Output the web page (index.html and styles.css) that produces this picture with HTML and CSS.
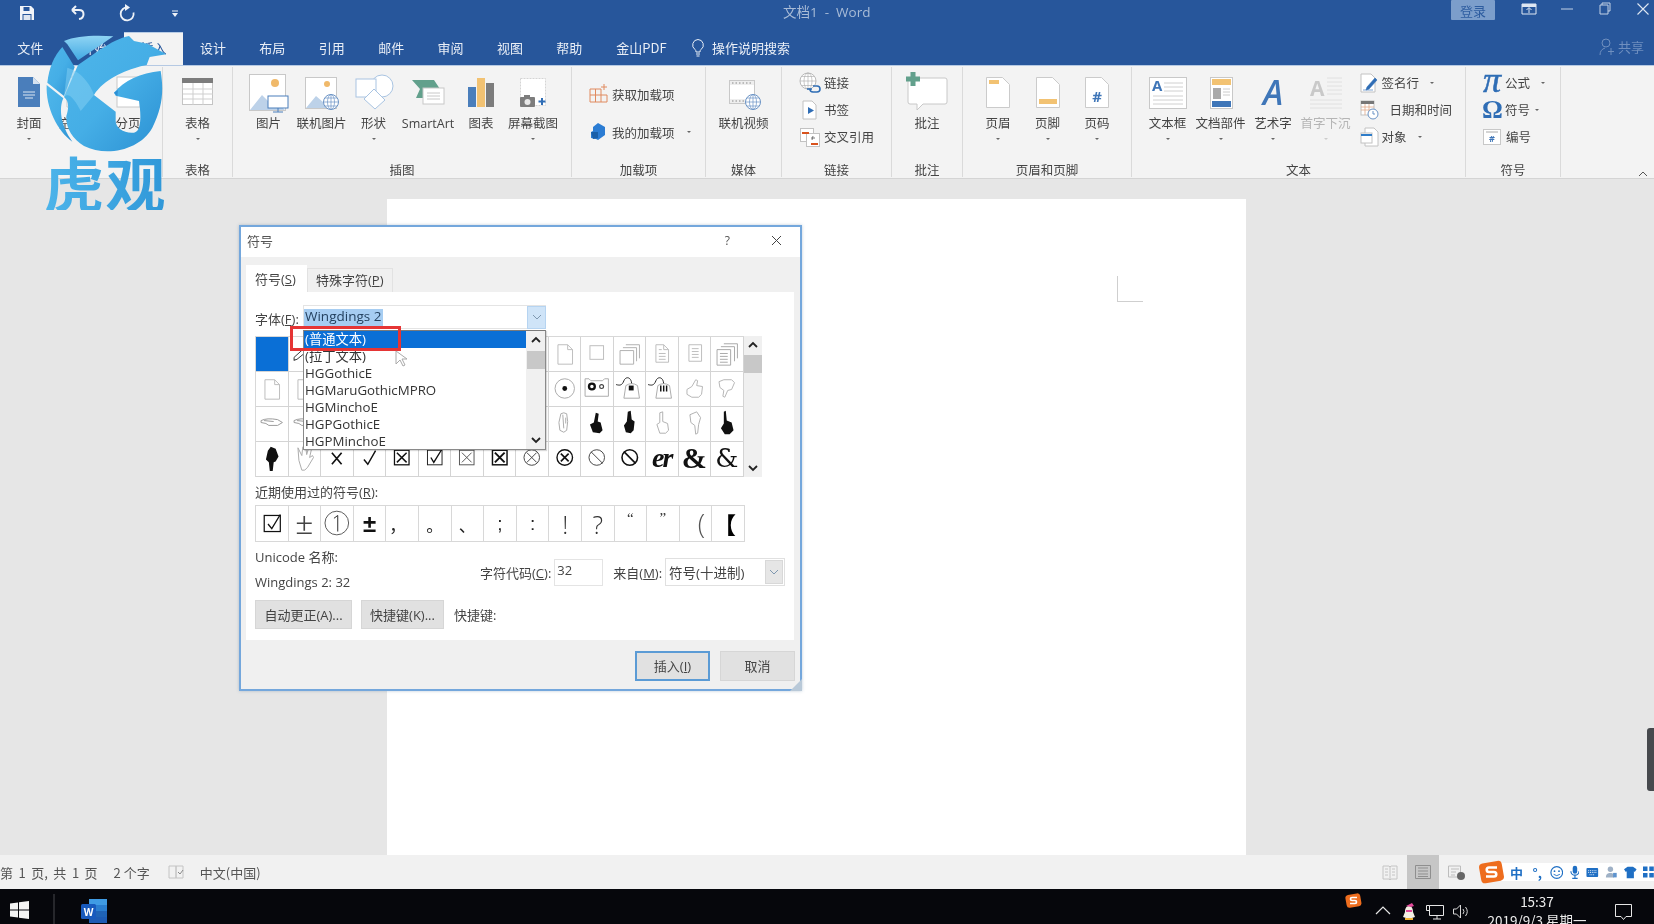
FILE: index.html
```html
<!DOCTYPE html>
<html lang="zh-CN">
<head>
<meta charset="utf-8">
<title>文档1 - Word</title>
<link rel="stylesheet" href="styles.css">
</head>
<body>
<svg class="defs" width="0" height="0">
  <defs>
    <symbol id="page" viewBox="0 0 32 35"><path d="M9 9h10l5 5v15H9z M19 9v5h5" fill="#fff" stroke="#bdbdbd"/></symbol>
    <symbol id="square" viewBox="0 0 32 35"><rect x="9" y="10" width="14" height="14" fill="#fff" stroke="#bdbdbd"/></symbol>
    <symbol id="stack" viewBox="0 0 32 35"><path d="M12 9h14v14M9 12h14v14M6 15h14v14H6z" fill="none" stroke="#b0b0b0"/></symbol>
    <symbol id="doc" viewBox="0 0 32 35"><path d="M10 9h8l5 5v13H10z M18 9v5h5 M13 14h3M13 18h7M13 21h7M13 24h7" fill="none" stroke="#bdbdbd"/></symbol>
    <symbol id="lines" viewBox="0 0 32 35"><path d="M10 9h13v17H10z M13 13h7M13 16h7M13 19h7M13 22h7" fill="none" stroke="#bdbdbd"/></symbol>
    <symbol id="docs" viewBox="0 0 32 35"><path d="M13 8h14v15M10 11h14v15M6 14h14v16H6z M9 18h8M9 21h8M9 24h8M9 27h8" fill="#fff" stroke="#a8a8a8"/></symbol>
    <symbol id="target" viewBox="0 0 32 35"><circle cx="16" cy="18" r="10" fill="#fff" stroke="#aaa"/><circle cx="16" cy="18" r="2.500" fill="#111"/></symbol>
    <symbol id="cassette" viewBox="0 0 32 35"><path d="M4 8h4l2 2h12l2-2h4v18H4z" fill="#fff" stroke="#aaa"/><circle cx="11" cy="16" r="3" fill="none" stroke="#111" stroke-width="2.400"/><circle cx="21" cy="16" r="2" fill="none" stroke="#444" stroke-width="1.200"/></symbol>
    <symbol id="mouse1" viewBox="0 0 32 35"><path d="M2 14c4 1 6 1 8-4 2-5 8-4 8 4" fill="none" stroke="#222"/><path d="M12 15q6-4 12 0l2 13H10z" fill="#fff" stroke="#aaa"/><rect x="15" y="15" width="5" height="5" fill="#111"/></symbol>
    <symbol id="mouse2" viewBox="0 0 32 35"><path d="M2 14c4 1 6 1 8-4 2-5 8-4 8 4" fill="none" stroke="#222"/><path d="M12 15q6-4 12 0l2 13H10z" fill="#fff" stroke="#aaa"/><path d="M15 15v6M18 15v6M21 15v6" stroke="#111" stroke-width="1.500"/></symbol>
    <symbol id="thumbup" viewBox="0 0 32 35"><path d="M8 19l5-3 4-7 2 1-1 5 6 1-1 8-3 3h-7l-5-3z" fill="#fff" stroke="#b5b5b5"/></symbol>
    <symbol id="thumbdown" viewBox="0 0 32 35"><path d="M8 11l5-2h8l3 3-3 7-4 1-3 7-2-1 1-6-4-3z" fill="#fff" stroke="#b5b5b5"/></symbol>
    <symbol id="hand1" viewBox="0 0 32 35"><path d="M11 25l-1-8 2-9 3-1 3 1 1 8-1 9-3 2zM14 9l1 14M17 12v6" fill="#fff" stroke="#aaa"/></symbol>
    <symbol id="hand2" viewBox="0 0 32 35"><path d="M12 27l-3-8 4-2 2-10 3 1-1 8 3 1 2 8-3 3z" fill="#111"/></symbol>
    <symbol id="hand3" viewBox="0 0 32 35"><path d="M12 27l-2-7 3-4 1-10 3-1 1 9 3 2-1 9-3 3z" fill="#111"/></symbol>
    <symbol id="hand4" viewBox="0 0 32 35"><path d="M11 19l3-2V7l3-1v10l5 2 1 7-3 3h-6z" fill="#fff" stroke="#b0b0b0"/></symbol>
    <symbol id="hand5" viewBox="0 0 32 35"><path d="M11 9l7-3 4 6-2 7-1 9-2 1-1-9-4-3z" fill="#fff" stroke="#b0b0b0"/></symbol>
    <symbol id="hand6" viewBox="0 0 32 35"><path d="M13 6l2-1 1 10 5 2 2 8-4 4h-5l-4-6 3-5z" fill="#111"/></symbol>
    <symbol id="handl" viewBox="0 0 32 35"><path d="M5 15q6-3 17-1l5 3-5 3h-9l-3-2-5-1z M8 15l10 1" fill="#fff" stroke="#999"/></symbol>
    <symbol id="blackhand" viewBox="0 0 32 35"><path d="M15 6l5 2 3 8-3 5-2 1-1 9h-3l-1-9-3-3 2-9z" fill="#111"/></symbol>
    <symbol id="whitehand" viewBox="0 0 32 35"><path d="M9 7l4 8 1-9 3 0 1 8 2-7 3 1-2 9 3-2 1 2-6 10-3 3h-3l-3-10z" fill="#fff" stroke="#aaa"/></symbol>
    <symbol id="pen" viewBox="0 0 32 35"><path d="M5 22l10-9 3 3-10 8-3 1zM5 25l1-1" fill="#fff" stroke="#333"/></symbol>
    <symbol id="crossbig" viewBox="0 0 32 35"><path d="M11 12l10 12M21 12l-10 12" fill="none" stroke="#111" stroke-width="1.700"/></symbol>
    <symbol id="checkbig" viewBox="0 0 32 35"><path d="M10 19l4 5 8-14" fill="none" stroke="#111" stroke-width="1.500"/></symbol>
    <symbol id="boxx" viewBox="0 0 32 35"><rect x="8.500" y="9.500" width="15" height="15" fill="none" stroke="#111" stroke-width="1.300"/><path d="M11 12l10 10M21 12l-10 10" stroke="#111" stroke-width="1.500"/></symbol>
    <symbol id="boxc" viewBox="0 0 32 35"><rect x="8.500" y="9.500" width="15" height="15" fill="none" stroke="#222"/><path d="M12 17l3 5 8-13" fill="none" stroke="#111" stroke-width="1.400"/></symbol>
    <symbol id="boxthin" viewBox="0 0 32 35"><rect x="8.500" y="9.500" width="15" height="15" fill="none" stroke="#555"/><path d="M11 12l10 10M21 12l-10 10" stroke="#555"/></symbol>
    <symbol id="boxbold" viewBox="0 0 32 35"><rect x="8.500" y="9.500" width="15" height="15" fill="none" stroke="#111" stroke-width="1.500"/><path d="M11 12l10 10M21 12l-10 10" stroke="#111" stroke-width="2"/></symbol>
    <symbol id="cxthin" viewBox="0 0 32 35"><circle cx="16" cy="17" r="8" fill="none" stroke="#444"/><path d="M11 12l10 10M21 12l-10 10" stroke="#444"/></symbol>
    <symbol id="cxbold" viewBox="0 0 32 35"><circle cx="16" cy="17" r="8" fill="none" stroke="#111" stroke-width="1.400"/><path d="M12 13l8 8M20 13l-8 8" stroke="#111" stroke-width="1.700"/></symbol>
    <symbol id="nothin" viewBox="0 0 32 35"><circle cx="16" cy="17" r="8" fill="none" stroke="#444"/><path d="M10 11l12 12" stroke="#444"/></symbol>
    <symbol id="nobold" viewBox="0 0 32 35"><circle cx="16" cy="17" r="8" fill="none" stroke="#111" stroke-width="1.600"/><path d="M10 11l12 12" stroke="#111" stroke-width="1.700"/></symbol>
    <symbol id="rcheck" viewBox="0 0 32 37"><rect x="8" y="10" width="17" height="17" fill="none" stroke="#111" stroke-width="1.300"/><path d="M12 19l4 5 9-15" fill="none" stroke="#111" stroke-width="1.400"/></symbol>
    <symbol id="rone" viewBox="0 0 32 37"><circle cx="16" cy="18" r="12.500" fill="none" stroke="#555"/><path d="M13 13l4-3v17" fill="none" stroke="#222"/></symbol>
    <symbol id="chev-up" viewBox="0 0 10 8"><path d="M1 6l4-4 4 4" fill="none" stroke="#222" stroke-width="1.800"/></symbol>
    <symbol id="chev-dn" viewBox="0 0 10 8"><path d="M1 2l4 4 4-4" fill="none" stroke="#222" stroke-width="1.800"/></symbol>
    <symbol id="chev-thin" viewBox="0 0 10 8"><path d="M1 2l4 4 4-4" fill="none" stroke="#7f98b0"/></symbol>
    <linearGradient id="logoG" x1="0" y1="0" x2="1" y2="1"><stop offset="0" stop-color="#4fb6ea"/><stop offset=".5" stop-color="#45aee6"/><stop offset="1" stop-color="#2a8fd2"/></linearGradient>
    <linearGradient id="logoH" x1="0" y1="0" x2="0" y2="1"><stop offset="0" stop-color="#8fd4f4"/><stop offset="1" stop-color="#41a9e3"/></linearGradient>
  </defs>
</svg>

<div class="app">
  <header class="chrome">
    <div class="titlebar">
      <div class="qat">
        <svg class="qi" width="18" height="18" viewBox="0 0 18 18"><path d="M2 2h11l3 3v11H2z" fill="#f1f4f9"/><rect x="5.500" y="3" width="6" height="4" fill="#27569b"/><rect x="4.500" y="10" width="9" height="6" fill="#27569b"/><rect x="5.500" y="11" width="7" height="5" fill="#dfe6f0"/></svg>
        <svg class="qi" width="18" height="18" viewBox="0 0 18 18"><path d="M4 6h7c6 0 6 8 0 9M4 6l4-4M4 6l4 4" fill="none" stroke="#eef2f8" stroke-width="2"/></svg>
        <svg class="qi" width="18" height="18" viewBox="0 0 18 18"><path d="M10 3.500a6.500 6.500 0 1 0 5.500 5" fill="none" stroke="#eef2f8" stroke-width="1.800"/><path d="M7 0l5 3.500-5 3.500z" fill="#eef2f8"/></svg>
        <svg class="qcaret" width="8" height="8" viewBox="0 0 8 8"><path d="M1 3h6L4 7z" fill="#eef2f8"/><path d="M1 1h6" stroke="#eef2f8"/></svg>
      </div>
      <div class="doctitle">文档1&nbsp; -&nbsp; Word</div>
      <div class="winbtns">
        <button class="login">登录</button>
        <svg width="16" height="14" viewBox="0 0 16 14"><path d="M1 2h14v10H1z" fill="none" stroke="#dfe7f2"/><path d="M1 2h14v3H1z" fill="#dfe7f2"/><path d="M8 11V6M5.500 8L8 5.500 10.500 8" fill="none" stroke="#dfe7f2"/></svg>
        <svg class="wb-min" width="12" height="14" viewBox="0 0 12 14"><path d="M0 7h12" stroke="#c3d1e5"/></svg>
        <svg class="wb-max" width="12" height="14" viewBox="0 0 12 14"><path d="M3 3V1h8v8H9M1 3h8v9H1z" fill="none" stroke="#c3d1e5"/></svg>
        <svg class="wb-close" width="12" height="14" viewBox="0 0 12 14"><path d="M.5 1.500l11 11M11.500 1.500l-11 11" stroke="#dfe7f2" stroke-width="1.100"/></svg>
      </div>
    </div>
    <nav class="tabs">
      <div class="tab tab-file">文件</div>
      <div class="tab">开始</div>
      <div class="tab tab-active">插入</div>
      <div class="tab">设计</div>
      <div class="tab">布局</div>
      <div class="tab">引用</div>
      <div class="tab">邮件</div>
      <div class="tab">审阅</div>
      <div class="tab">视图</div>
      <div class="tab">帮助</div>
      <div class="tab tab-pdf">金山PDF</div>
      <div class="search">
        <svg width="14" height="20" viewBox="0 0 14 20"><path d="M7 1.500a5.500 5.500 0 0 0-3 10c.8.600 1 1.500 1 2.500h4c0-1 .2-1.900 1-2.500a5.500 5.500 0 0 0-3-10zM5 16h4M5.500 18h3" fill="none" stroke="#eaf0f8"/></svg>
        <span>操作说明搜索</span>
      </div>
      <div class="share">
        <svg width="16" height="18" viewBox="0 0 16 18"><circle cx="7" cy="5" r="4" fill="none" stroke="#6f8fbf"/><path d="M1 17c0-4 2-6 5-7M12 10v7M9 13.500h6" fill="none" stroke="#6f8fbf"/></svg>
        <span>共享</span>
      </div>
    </nav>
  </header>

  <section class="ribbon">
    <div class="group g-pages">
      <div class="items gap-pages">
        <div class="item w40">
          <div class="ico"><svg width="44" height="42" viewBox="0 0 44 42"><path d="M11 5h15l7 7v23H11z" fill="#4a7ebb"/><path d="M26 5l7 7h-7z" fill="#d5e2f0"/><path d="M16 20h12M16 23h12M18 26h8" stroke="#dbe6f2"/></svg></div>
          <span class="lab">封面</span><i class="caret"></i>
        </div>
        <div class="item w42">
          <div class="ico"><svg width="44" height="42" viewBox="0 0 44 42"><path d="M11 5h16l6 6v24H11z" fill="#fff" stroke="#c8c8c8"/></svg></div>
          <span class="lab">空白页</span>
        </div>
        <div class="item w44">
          <div class="ico"><svg width="44" height="42" viewBox="0 0 44 42"><rect x="11" y="5" width="23" height="12" fill="#fff" stroke="#c8c8c8"/><rect x="11" y="21" width="23" height="14" fill="#fff" stroke="#c8c8c8"/></svg></div>
          <span class="lab">分页</span>
        </div>
      </div>
      <div class="glabel"></div>
    </div>

    <div class="group g-table">
      <div class="items center">
        <div class="item w40">
          <div class="ico"><svg width="44" height="42" viewBox="0 0 44 42"><rect x="6.500" y="6.500" width="30" height="26" fill="#fff" stroke="#c4c4c4"/><rect x="6" y="6" width="31" height="5" fill="#7c7c7c"/><path d="M7 17h30M7 22h30M7 27h30M17 11v22M27 11v22" stroke="#cfcfcf"/></svg></div>
          <span class="lab">表格</span><i class="caret"></i>
        </div>
      </div>
      <div class="glabel">表格</div>
    </div>

    <div class="group g-illus">
      <div class="items gap-illus">
        <div class="item w42">
          <div class="ico"><svg width="44" height="42" viewBox="0 0 44 42"><rect x="2.500" y="2.500" width="36" height="36" fill="#fff" stroke="#c8c8c8"/><circle cx="28" cy="11" r="4" fill="#f0b96a"/><path d="M3 38l12-15 8 8 5-3 10 10z" fill="#bdd2e9"/><rect x="21" y="24" width="20" height="12" fill="#fff" stroke="#4a7ebb"/><path d="M31 36v4M26 40h10" stroke="#4a7ebb"/></svg></div>
          <span class="lab">图片</span>
        </div>
        <div class="item w57">
          <div class="ico"><svg width="44" height="42" viewBox="0 0 44 42"><rect x="5.500" y="5.500" width="31" height="31" fill="#fff" stroke="#c8c8c8"/><circle cx="27" cy="12" r="3" fill="#f0b96a"/><path d="M6 36l10-12 7 6 13 6z" fill="#bdd2e9"/><circle cx="31" cy="30" r="7.500" fill="#fff" stroke="#6b93c5"/><path d="M23.500 30h15M31 22.500v15M25 26h12M25 34h12" stroke="#6b93c5" stroke-width=".7" fill="none"/><ellipse cx="31" cy="30" rx="3.500" ry="7.500" fill="none" stroke="#6b93c5" stroke-width=".7"/></svg></div>
          <span class="lab">联机图片</span>
        </div>
        <div class="item w40">
          <div class="ico"><svg width="44" height="42" viewBox="0 0 44 42"><circle cx="30" cy="14" r="11" fill="#fff" stroke="#a9c4e2"/><rect x="4" y="7" width="20" height="18" fill="#fff" stroke="#a9c4e2"/><path d="M12 27l10-10 11 11-10 9z" fill="#fff" stroke="#a9c4e2"/></svg></div>
          <span class="lab">形状</span><i class="caret"></i>
        </div>
        <div class="item w62">
          <div class="ico"><svg width="44" height="42" viewBox="0 0 44 42"><path d="M6 8h22l6 9-6 9H10l4-9z" fill="#62a08c"/><rect x="17" y="16" width="21" height="16" fill="#fff" stroke="#c8c8c8"/><path d="M21 21h13M21 24h13M21 27h13" stroke="#c8c8c8"/></svg></div>
          <span class="lab">SmartArt</span>
        </div>
        <div class="item w37">
          <div class="ico"><svg width="44" height="42" viewBox="0 0 44 42"><rect x="9" y="15" width="8" height="20" fill="#4a7ebb"/><rect x="18" y="6" width="8" height="29" fill="#f2c272"/><rect x="27" y="11" width="8" height="24" fill="#7c7c7c"/></svg></div>
          <span class="lab">图表</span>
        </div>
        <div class="item w60">
          <div class="ico"><svg width="44" height="42" viewBox="0 0 44 42"><rect x="9.500" y="6.500" width="25" height="27" fill="#fff" stroke="#d4d4d4" stroke-dasharray="2 1"/><rect x="9" y="25" width="15" height="10" rx="1" fill="#7d7d7d"/><rect x="13" y="23" width="6" height="3" fill="#7d7d7d"/><circle cx="16.500" cy="30" r="3" fill="#e8e8e8"/><path d="M31 26v7M27.500 29.500h7" stroke="#2f6db5" stroke-width="2"/></svg></div>
          <span class="lab">屏幕截图</span><i class="caret"></i>
        </div>
      </div>
      <div class="glabel">插图</div>
    </div>

    <div class="group g-addin">
      <div class="items stack stack-addin">
        <div class="row">
          <svg class="rowi" width="20" height="20" viewBox="0 0 20 20"><path d="M1 5h11v13H1zM1 11h11M6.500 5v13M12 11h6v7h-6" fill="none" stroke="#e08a5f"/><path d="M15 0v6M12 3h6" stroke="#e08a5f"/></svg>
          <span>获取加载项</span>
        </div>
        <div class="row">
          <svg class="rowi" width="20" height="18" viewBox="0 0 20 18"><path d="M9 0l7 4v8l-7 5-2-1-5-1V9l2-1V4z" fill="#2b7cd3"/><path d="M2 9h7v6l-5 1z" fill="#1a5fa8"/></svg>
          <span>我的加载项</span><i class="caret inline c-add"></i>
        </div>
      </div>
      <div class="glabel">加载项</div>
    </div>

    <div class="group g-media">
      <div class="items center">
        <div class="item w52">
          <div class="ico"><svg width="44" height="42" viewBox="0 0 44 42"><rect x="7.500" y="8.500" width="25" height="23" fill="#fff" stroke="#c8c8c8"/><path d="M8 9h24v4H8zM8 27h24v4H8z" fill="#eee"/><path d="M10 11h20M10 29h20" stroke="#888" stroke-dasharray="1.500 2"/><circle cx="31" cy="30" r="7.500" fill="#fff" stroke="#6b93c5"/><path d="M23.500 30h15M31 22.500v15M25 26h12M25 34h12" stroke="#6b93c5" stroke-width=".7"/><ellipse cx="31" cy="30" rx="3.500" ry="7.500" fill="none" stroke="#6b93c5" stroke-width=".7"/></svg></div>
          <span class="lab">联机视频</span>
        </div>
      </div>
      <div class="glabel">媒体</div>
    </div>

    <div class="group g-links">
      <div class="items stack stack-three">
        <div class="row">
          <svg class="rowi wide" width="22" height="22" viewBox="0 0 22 22"><circle cx="9" cy="9" r="8" fill="#fff" stroke="#a8a8a8" stroke-width=".8"/><path d="M1 9h16M9 1v16M3 4.500h12M3 13.500h12" stroke="#a8a8a8" stroke-width=".6"/><ellipse cx="9" cy="9" rx="4" ry="8" fill="none" stroke="#a8a8a8" stroke-width=".6"/><path d="M8 17h5M14 14h4a3 3 0 0 1 0 6h-4a3 3 0 0 1-3-3" fill="none" stroke="#2f6db5" stroke-width="1.600"/></svg>
          <span>链接</span>
        </div>
        <div class="row">
          <svg class="rowi wide" width="22" height="20" viewBox="0 0 22 20"><path d="M4 1h9l4 4v14H4z" fill="#fff" stroke="#c2c2c2"/><path d="M9 7l6 3.500L9 14z" fill="#2f6db5"/></svg>
          <span>书签</span>
        </div>
        <div class="row">
          <svg class="rowi wide" width="22" height="20" viewBox="0 0 22 20"><rect x="1.500" y="1.500" width="13" height="13" fill="#fff" stroke="#c2c2c2"/><rect x="7.500" y="6.500" width="13" height="13" fill="#fff" stroke="#c2c2c2"/><path d="M3 6h7" stroke="#d9531e" stroke-width="2"/><path d="M12 17h7" stroke="#d9531e" stroke-width="2"/><path d="M14 9l-1 4M12 11h4" stroke="#777"/></svg>
          <span>交叉引用</span>
        </div>
      </div>
      <div class="glabel">链接</div>
    </div>

    <div class="group g-comment">
      <div class="items center">
        <div class="item w40">
          <div class="ico"><svg width="44" height="42" viewBox="0 0 44 42"><path d="M5 6h35a2 2 0 0 1 2 2v22a2 2 0 0 1-2 2H18l-6 6v-6H5a2 2 0 0 1-2-2V8a2 2 0 0 1 2-2z" fill="#fff" stroke="#c8c8c8"/><path d="M8 0v14M1 7h14" stroke="#62a08c" stroke-width="5"/></svg></div>
          <span class="lab">批注</span>
        </div>
      </div>
      <div class="glabel">批注</div>
    </div>

    <div class="group g-hf">
      <div class="items gap-hf">
        <div class="item w40">
          <div class="ico"><svg width="44" height="42" viewBox="0 0 44 42"><path d="M10.500 5.500h16l7 7v23h-23z" fill="#fff" stroke="#cbcbcb"/><rect x="13" y="8" width="10" height="4" fill="#f2c272"/></svg></div>
          <span class="lab">页眉</span><i class="caret"></i>
        </div>
        <div class="item w40">
          <div class="ico"><svg width="44" height="42" viewBox="0 0 44 42"><path d="M10.500 5.500h16l7 7v23h-23z" fill="#fff" stroke="#cbcbcb"/><rect x="13" y="27" width="18" height="5" fill="#f2c272"/></svg></div>
          <span class="lab">页脚</span><i class="caret"></i>
        </div>
        <div class="item w40">
          <div class="ico"><svg width="44" height="42" viewBox="0 0 44 42"><path d="M10.500 5.500h16l7 7v23h-23z" fill="#fff" stroke="#cbcbcb"/><text x="22" y="30" class="hash">#</text></svg></div>
          <span class="lab">页码</span><i class="caret"></i>
        </div>
      </div>
      <div class="glabel">页眉和页脚</div>
    </div>

    <div class="group g-text">
      <div class="items gap-text">
        <div class="item w40">
          <div class="ico"><svg width="44" height="42" viewBox="0 0 44 42"><rect x="3.500" y="5.500" width="37" height="31" fill="#fff" stroke="#c8c8c8"/><text x="6" y="19" class="iconA">A</text><path d="M18 11h19M18 15h19M18 19h19M7 24h30M7 28h30M7 32h30" stroke="#d0d0d0"/></svg></div>
          <span class="lab">文本框</span><i class="caret"></i>
        </div>
        <div class="item w52">
          <div class="ico"><svg width="44" height="42" viewBox="0 0 44 42"><rect x="11.500" y="5.500" width="22" height="31" fill="#fff" stroke="#c8c8c8"/><rect x="13" y="7" width="19" height="6" fill="#f2c272"/><rect x="14" y="16" width="8" height="11" fill="#aaa"/><path d="M24 17h7M24 20h7M24 23h7" stroke="#ccc"/><rect x="13" y="29" width="19" height="6" fill="#3f76b8"/></svg></div>
          <span class="lab">文档部件</span><i class="caret"></i>
        </div>
        <div class="item w39">
          <div class="ico"><svg width="44" height="42" viewBox="0 0 44 42"><text x="22" y="33" class="artA">A</text></svg></div>
          <span class="lab">艺术字</span><i class="caret"></i>
        </div>
        <div class="item w52">
          <div class="ico"><svg width="44" height="42" viewBox="0 0 44 42"><text x="6" y="24" class="dropA">A</text><path d="M23 6h15M23 10h15M23 14h15M23 18h15M23 22h15M6 28h32M6 32h32M6 36h32" stroke="#e0e0e0"/></svg></div>
          <span class="lab off">首字下沉</span><i class="caret off"></i>
        </div>
        <div class="stack stack-obj">
          <div class="row">
            <svg class="rowi" width="19" height="20" viewBox="0 0 19 20"><path d="M1 1h10l4 4v14H1z" fill="#fff" stroke="#c2c2c2"/><path d="M7 14l8-9 2 2-8 9-3 1zM3 17h10" fill="#2f6db5" stroke="#2f6db5" stroke-width=".6"/></svg>
            <span>签名行</span><i class="caret inline c-sign"></i>
          </div>
          <div class="row">
            <svg class="rowi" width="19" height="20" viewBox="0 0 19 20"><rect x="1" y="1" width="13" height="14" fill="#fff" stroke="#c2c2c2"/><rect x="1" y="1" width="13" height="3" fill="#777"/><path d="M1 7h13M1 10h13M5 4v11M9 4v11" stroke="#e0a98a" stroke-width=".8"/><circle cx="13" cy="14" r="5" fill="#fff" stroke="#6b93c5"/><path d="M13 11v3h2" fill="none" stroke="#6b93c5"/></svg>
            <span class="date">日期和时间</span>
          </div>
          <div class="row">
            <svg class="rowi" width="19" height="20" viewBox="0 0 19 20"><path d="M5 1h9l4 4v14H5z" fill="#fff" stroke="#c2c2c2"/><rect x="1" y="6" width="11" height="10" fill="#fff" stroke="#c2c2c2"/><path d="M1 8h11" stroke="#2f7dc9" stroke-width="2"/></svg>
            <span>对象</span><i class="caret inline c-obj"></i>
          </div>
        </div>
      </div>
      <div class="glabel">文本</div>
    </div>

    <div class="group g-sym">
      <div class="items stack stack-three">
        <div class="row">
          <span class="pi">π</span><span>公式</span><i class="caret inline c-sym"></i>
        </div>
        <div class="row">
          <span class="omega">Ω</span><span>符号</span><i class="caret inline c-sym2"></i>
        </div>
        <div class="row">
          <svg class="rowi sym" width="18" height="16" viewBox="0 0 18 16"><rect x=".5" y=".5" width="17" height="15" fill="#fff" stroke="#c8c8c8"/><path d="M3 3h12" stroke="#aaa"/><text x="9" y="13" class="hashs">#</text></svg>
          <span>编号</span>
        </div>
      </div>
      <div class="glabel">符号</div>
    </div>

    <div class="collapse">
      <svg width="10" height="8" viewBox="0 0 10 8"><path d="M1 6l4-4 4 4" fill="none" stroke="#555"/></svg>
    </div>
  </section>

  <main class="docarea">
    <div class="page"><div class="cropmark"></div></div>
  </main>

  <footer class="status">
    <span class="st st-page">第 1 页, 共 1 页</span>
    <span class="st st-words">2 个字</span>
    <svg class="st-proof" width="17" height="14" viewBox="0 0 17 14"><path d="M1 1h7v12H1zM8 1h7v12H8z" fill="none" stroke="#c4c4c4"/><path d="M10 7l2 2 3-4" fill="none" stroke="#888"/></svg>
    <span class="st st-lang">中文(中国)</span>
    <div class="views">
      <svg class="view" width="16" height="15" viewBox="0 0 16 15"><path d="M1 1h6l1 1 1-1h6v13H9l-1 1-1-1H1zM8 2v12M3 4h3M3 7h3M3 10h3M10 4h3M10 7h3M10 10h3" fill="none" stroke="#c4c4c4"/></svg>
      <div class="view-on"><svg width="16" height="14" viewBox="0 0 16 14"><path d="M.5.5h15v13H.500zM3 3h10M3 6h10M3 9h10M3 11.500h10" fill="none" stroke="#8f8f8f"/></svg></div>
      <svg class="view" width="18" height="15" viewBox="0 0 18 15"><path d="M.5 1h12v11H.5zM3 4h8M3 7h5M3 10h4" fill="none" stroke="#bdbdbd"/><circle cx="13" cy="11" r="4" fill="#666"/></svg>
    </div>
    <div class="sogou">
      <svg class="sg-logo" width="26" height="24" viewBox="0 0 26 24"><rect x="1" y="2" width="23" height="20" rx="4" fill="#ee6d1e" transform="rotate(-10 13 12)"/><path d="M18 7.500h-8a2 2 0 0 0 0 4.500h5a2 2 0 0 1 0 4.500H7" fill="none" stroke="#fff" stroke-width="2.600"/></svg>
      <div class="sg-bar">
        <span class="sg-zh">中</span>
        <span class="sg-dot">°,</span>
        <svg width="15" height="15" viewBox="0 0 15 15"><circle cx="7.500" cy="7.500" r="6.500" fill="none" stroke="#1f6fc4" stroke-width="1.300"/><circle cx="5" cy="6" r="1" fill="#1f6fc4"/><circle cx="10" cy="6" r="1" fill="#1f6fc4"/><path d="M4 9.500q3.500 3 7 0" fill="none" stroke="#1f6fc4"/></svg>
        <svg width="11" height="15" viewBox="0 0 11 15"><rect x="3" y="0" width="5" height="9" rx="2.500" fill="#1f6fc4"/><path d="M1 6a4.500 4.500 0 0 0 9 0M5.500 11v3M2.500 14h6" fill="none" stroke="#1f6fc4" stroke-width="1.300"/></svg>
        <svg width="14" height="11" viewBox="0 0 14 11"><rect x=".5" y=".5" width="13" height="10" rx="1" fill="#1f6fc4"/><path d="M2.500 3.500h9M2.500 5.500h9M4 8h6" stroke="#fff" stroke-dasharray="1 1"/></svg>
        <svg width="14" height="14" viewBox="0 0 14 14"><circle cx="6" cy="4" r="3" fill="#9fb1c6"/><path d="M1 13c0-4 2-5 5-5s4 1 4 5z" fill="#9fb1c6"/><rect x="9" y="8" width="4" height="5" fill="#5e93ce"/></svg>
        <svg width="14" height="13" viewBox="0 0 14 13"><path d="M4 0h6l4 3-2 3-1-1v8H3V5L2 6 0 3z" fill="#1f6fc4"/></svg>
        <svg width="12" height="12" viewBox="0 0 12 12"><path d="M0 0h5v5H0zM7 0h5v5H7zM0 7h5v5H0zM7 7h5v5H7z" fill="#1f6fc4"/></svg>
      </div>
    </div>
  </footer>

  <footer class="taskbar">
    <svg class="startbtn" width="19" height="18" viewBox="0 0 19 18"><path d="M0 2.500L8 1.400V8.500H0zM9 1.200L19 0V8.500H9zM0 9.500H8V16.600L0 15.500zM9 9.500H19V18L9 16.800z" fill="#f4f4f4"/></svg>
    <div class="tb-sep"></div>
    <svg class="wordico" width="27" height="24" viewBox="0 0 27 24"><rect x="8" y="0" width="18" height="24" fill="#1d5bb4"/><rect x="8" y="0" width="18" height="6" fill="#3f9be4"/><rect x="8" y="6" width="18" height="6" fill="#2a7ed0"/><rect x="8" y="12" width="18" height="6" fill="#1f63b6"/><rect x="0" y="5" width="15" height="15" rx="1.500" fill="#185abd"/><text x="7.500" y="16.500" class="wordW">W</text></svg>
    <div class="tray">
      <svg class="tr-sg" width="18" height="16" viewBox="0 0 18 16"><rect x="1" y="1" width="15" height="13" rx="3" fill="#ee6d1e" transform="rotate(-10 9 8)"/><path d="M12 4.500H7a1.500 1.500 0 0 0 0 3h3a1.500 1.500 0 0 1 0 3H5" fill="none" stroke="#fff" stroke-width="1.700"/></svg>
      <svg class="tr-up" width="16" height="9" viewBox="0 0 16 9"><path d="M1 8l7-7 7 7" fill="none" stroke="#e6e6e6" stroke-width="1.200"/></svg>
      <svg class="tr-qq" width="12" height="18" viewBox="0 0 12 18"><path d="M6 4c3 0 4 3 4 6l2 5-3 1H3l-3-1 2-5c0-3 1-6 4-6z" fill="#f4f0e4"/><path d="M3 4l6-3 2 3-3 1z" fill="#e24a9b"/><path d="M2 16h8v2H2z" fill="#f0b334"/><path d="M3 9h6" stroke="#e24a9b" stroke-width="2"/></svg>
      <svg class="tr-net" width="19" height="17" viewBox="0 0 19 17"><path d="M4.500 2.500h14v10h-14zM8 16h8M12 13v3M1.500 2.500h3M1.500 2.500v5h3" fill="none" stroke="#e6e6e6"/></svg>
      <svg class="tr-vol" width="18" height="17" viewBox="0 0 18 17"><path d="M1.500 6v5h3l4 4V2l-4 4z M11 6q2 2.500 0 5M13.500 4q3.500 4.500 0 9" fill="none" stroke="#d8d8d8"/></svg>
      <div class="clock"><span>15:37</span><span>2019/9/3 星期一</span></div>
      <svg class="tr-note" width="19" height="18" viewBox="0 0 19 18"><path d="M1.500 1.500h16v12H12l-2.500 3-2.500-3H1.500z" fill="none" stroke="#e6e6e6"/></svg>
    </div>
  </footer>

  <div class="handle"></div>

  <section class="dialog">
    <div class="dlg-title">
      <span>符号</span>
      <span class="dlg-help">?</span>
      <svg class="dlg-x" width="11" height="11" viewBox="0 0 11 11"><path d="M1 1l9 9M10 1l-9 9" stroke="#444"/></svg>
    </div>
    <div class="dlg-body">
      <div class="dlg-tabs">
        <div class="dtab dtab-on">符号(<u>S</u>)</div>
        <div class="dtab">特殊字符(<u>P</u>)</div>
      </div>
      <div class="panel">
        <div class="fontrow">
          <span class="fontlab">字体(<u>F</u>):</span>
          <div class="combo">
            <span class="combo-val">Wingdings 2</span>
            <span class="combo-btn"><svg width="10" height="8"><use href="#chev-thin"/></svg></span>
          </div>
        </div>

        <div class="gridrow">
          <div class="symgrid">
            <div class="cell cell-on"></div>
            <div class="cell"><svg><use href="#pen"/></svg></div><div class="cell"></div><div class="cell"></div><div class="cell"></div><div class="cell"></div><div class="cell"></div><div class="cell"></div><div class="cell"></div>
            <div class="cell"><svg><use href="#page"/></svg></div><div class="cell"><svg><use href="#square"/></svg></div><div class="cell"><svg><use href="#stack"/></svg></div><div class="cell"><svg><use href="#doc"/></svg></div><div class="cell"><svg><use href="#lines"/></svg></div><div class="cell"><svg><use href="#docs"/></svg></div>

            <div class="cell"><svg><use href="#page"/></svg></div><div class="cell"><svg><use href="#page"/></svg></div><div class="cell"></div><div class="cell"></div><div class="cell"></div><div class="cell"></div><div class="cell"></div><div class="cell"></div><div class="cell"></div>
            <div class="cell"><svg><use href="#target"/></svg></div><div class="cell"><svg><use href="#cassette"/></svg></div><div class="cell"><svg><use href="#mouse1"/></svg></div><div class="cell"><svg><use href="#mouse2"/></svg></div><div class="cell"><svg><use href="#thumbup"/></svg></div><div class="cell"><svg><use href="#thumbdown"/></svg></div>

            <div class="cell"><svg><use href="#handl"/></svg></div><div class="cell"><svg><use href="#handl"/></svg></div><div class="cell"></div><div class="cell"></div><div class="cell"></div><div class="cell"></div><div class="cell"></div><div class="cell"></div><div class="cell"></div>
            <div class="cell"><svg><use href="#hand1"/></svg></div><div class="cell"><svg><use href="#hand2"/></svg></div><div class="cell"><svg><use href="#hand3"/></svg></div><div class="cell"><svg><use href="#hand4"/></svg></div><div class="cell"><svg><use href="#hand5"/></svg></div><div class="cell"><svg><use href="#hand6"/></svg></div>

            <div class="cell"><svg><use href="#blackhand"/></svg></div><div class="cell"><svg><use href="#whitehand"/></svg></div><div class="cell"><svg><use href="#crossbig"/></svg></div><div class="cell"><svg><use href="#checkbig"/></svg></div><div class="cell"><svg><use href="#boxx"/></svg></div><div class="cell"><svg><use href="#boxc"/></svg></div><div class="cell"><svg><use href="#boxthin"/></svg></div><div class="cell"><svg><use href="#boxbold"/></svg></div><div class="cell"><svg><use href="#cxthin"/></svg></div>
            <div class="cell"><svg><use href="#cxbold"/></svg></div><div class="cell"><svg><use href="#nothin"/></svg></div><div class="cell"><svg><use href="#nobold"/></svg></div><div class="cell"><span class="et">er</span></div><div class="cell"><span class="amp">&amp;</span></div><div class="cell"><span class="amp2">&amp;</span></div>
          </div>
          <div class="vscroll">
            <svg width="10" height="8"><use href="#chev-up"/></svg>
            <div class="vthumb"></div>
            <svg class="vdown" width="10" height="8"><use href="#chev-dn"/></svg>
          </div>
        </div>

        <div class="recent-lab">近期使用过的符号(<u>R</u>):</div>
        <div class="recent">
          <div class="rc"><svg><use href="#rcheck"/></svg></div>
          <div class="rc r-pm">±</div>
          <div class="rc"><svg><use href="#rone"/></svg></div>
          <div class="rc r-pmb">±</div>
          <div class="rc r-cjk r-comma">，</div>
          <div class="rc r-cjk">。</div>
          <div class="rc r-cjk">、</div>
          <div class="rc r-p">;</div>
          <div class="rc r-p">:</div>
          <div class="rc r-bang">!</div>
          <div class="rc r-q">?</div>
          <div class="rc r-s">“</div>
          <div class="rc r-s">”</div>
          <div class="rc r-par">(</div>
          <div class="rc r-br">【</div>
        </div>

        <div class="info">
          <div class="info-l">
            <div>Unicode 名称:</div>
            <div>Wingdings 2: 32</div>
          </div>
          <div class="info-r">
            <span>字符代码(<u>C</u>):</span>
            <div class="codeinput">32</div>
            <span class="from">来自(<u>M</u>):</span>
            <div class="fromsel">
              <span>符号(十进制)</span>
              <span class="fromsel-btn"><svg width="10" height="8"><use href="#chev-thin"/></svg></span>
            </div>
          </div>
        </div>

        <div class="btnrow">
          <div class="btn btn-auto">自动更正(A)...</div>
          <div class="btn btn-key">快捷键(K)...</div>
          <span class="keylab">快捷键:</span>
        </div>

        <div class="droplist">
          <div class="dl-items">
            <div class="dl-sel">(普通文本)</div>
            <div>(拉丁文本)</div>
            <div>HGGothicE</div>
            <div>HGMaruGothicMPRO</div>
            <div>HGMinchoE</div>
            <div>HGPGothicE</div>
            <div>HGPMinchoE</div>
          </div>
          <div class="dl-scroll">
            <svg width="10" height="8"><use href="#chev-up"/></svg>
            <div class="dl-thumb"></div>
            <svg class="vdown" width="10" height="8"><use href="#chev-dn"/></svg>
          </div>
        </div>
        <div class="redbox"></div>
        <svg class="cur-arrow" width="13" height="17" viewBox="0 0 13 17"><path d="M1 1l11 8H7l3 6-2 1-3-6-4 4z" fill="#fff" stroke="#aaa"/></svg>
      </div>
      <div class="dlg-foot">
        <div class="btn btn-main btn-default">插入(<u>I</u>)</div>
        <div class="btn btn-main">取消</div>
      </div>
    </div>
    <svg class="grip" width="12" height="12" viewBox="0 0 12 12"><path d="M12 0v12H0z" fill="#b9c9d8"/></svg>
  </section>

  <div class="wm">
    <svg class="wm-logo" width="124" height="122" viewBox="130 36 372 366">
      <path fill="url(#logoG)" d="M232 132L300 85C330 65 360 50 385 45L400 60 440 68 470 85 497 100 447 108 438 132 420 136C370 150 310 175 280 222L345 272V300C345 320 370 338 400 335 425 332 420 270 415 240L345 224 340 215C370 180 420 155 480 150 490 210 485 260 455 320 420 385 320 410 250 375 215 355 195 320 197 285 205 260 205 240 190 228Z"/>
      <path fill="url(#logoH)" d="M190 60C225 45 280 42 338 46L300 72 232 118 200 70Z"/>
      <path fill="url(#logoG)" d="M185 78L222 138 190 225 140 185C145 140 160 105 185 78Z"/>
      <path fill="url(#logoG)" d="M138 192L188 232C175 260 178 310 215 362 170 330 135 260 138 192Z"/>
      <path fill="#2d8fd4" d="M340 215L352 207 350 226Z"/>
      <path fill="#7fcdf2" opacity=".55" d="M200 140C240 150 270 190 280 222L240 270C225 240 205 210 190 228Z"/>
    </svg>
    <div class="wm-text">虎观</div>
  </div>
</div>
</body>
</html>
```

FILE: styles.css
```css
* { box-sizing: border-box; }
html, body { margin: 0; padding: 0; }
body {
  width: 1654px;
  height: 924px;
  overflow: hidden;
  font-family: "Open Sans", "Noto Sans CJK SC", sans-serif;
  font-size: 13px;
  color: #444;
}
.defs { position: absolute; }
u { text-decoration: underline; text-underline-offset: 1px; }
.app {
  position: relative;
  width: 1654px;
  height: 924px;
  display: flex;
  flex-direction: column;
  overflow: hidden;
  filter: blur(.35px);
}

/* title bar + tabs */
.chrome { background: #27569b; height: 65px; color: #e9eef6; flex: none; }
.titlebar { height: 32px; display: flex; align-items: flex-start; }
.qat { display: flex; align-items: center; padding-left: 18px; height: 26px; }
.qi { margin-right: 32px; }
.qcaret { margin-left: 3px; margin-top: 2px; }
.doctitle { margin-left: 604px; color: #a9bcd7; font-size: 13.500px; height: 26px; line-height: 25px; }
.winbtns { margin-left: auto; display: flex; align-items: flex-start; height: 32px; }
.login {
  width: 44px; height: 20px; padding: 0; border: 0; border-radius: 1px;
  background: #7c9ecb; color: #2d5c9f; font: 13px "Noto Sans CJK SC", sans-serif;
  margin-right: 26px;
}
.winbtns svg { margin-top: 2px; }
.wb-min { margin-left: 24px; }
.wb-max { margin-left: 26px; }
.wb-close { margin-left: 26px; margin-right: 5px; }

.tabs { height: 33px; display: flex; align-items: stretch; font-family: "Noto Sans CJK SC", sans-serif; font-size: 13px; }
.tab { width: 59.400px; text-align: center; line-height: 31px; flex: none; }
.tab-file { width: 64.500px; padding-right: 4px; }
.tab-active { background: #f3f3f3; color: #27569b; border-top: 1px solid #b9cde6; line-height: 29px; }
.tab-pdf { width: 85px; }
.search { display: flex; align-items: center; gap: 7px; margin-left: 7px; height: 31px; }
.share { margin-left: auto; display: flex; align-items: center; gap: 3px; height: 29px; padding-right: 10px; color: #6f8fbf; }

/* ribbon */
.ribbon {
  flex: none;
  height: 114px;
  background: #f3f3f3;
  border-top: 1px solid #b5c9e3;
  border-bottom: 1px solid #d4d4d4;
  display: flex;
  font-family: "Noto Sans CJK SC", sans-serif;
  font-size: 12.500px;
  color: #444;
  padding-top: 1px;
}
.group {
  flex: none;
  height: 110px;
  border-right: 1px solid #dadada;
  display: flex;
  flex-direction: column;
}
.g-pages { width: 163px; }
.g-table { width: 70px; }
.g-illus { width: 339px; }
.g-addin { width: 134px; }
.g-media { width: 76px; }
.g-links { width: 110px; }
.g-comment { width: 71px; }
.g-hf { width: 169px; }
.g-text { width: 334px; }
.g-sym { width: 95px; }
.items { height: 95px; display: flex; padding-top: 5px; }
.center { justify-content: center; }
.glabel { height: 15px; line-height: 15px; text-align: center; }
.gap-pages { padding-left: 9px; gap: 7.500px; }
.gap-illus { padding-left: 14.500px; gap: 3.500px; }
.gap-hf { padding-left: 15px; gap: 9.500px; }
.gap-text { padding-left: 15.600px; gap: 7px; }
.item { display: flex; flex-direction: column; align-items: center; flex: none; }
.w37 { width: 37px; } .w39 { width: 39px; } .w40 { width: 40px; } .w42 { width: 42px; }
.w44 { width: 44px; } .w52 { width: 52px; } .w57 { width: 57px; } .w60 { width: 60px; } .w62 { width: 62px; }
.ico { height: 43px; display: flex; justify-content: center; }
.ico svg { flex: none; overflow: visible; }
.lab { height: 18px; line-height: 18px; white-space: nowrap; font-family: "Open Sans", "Noto Sans CJK SC", sans-serif; font-size: 12.500px; }
.off { color: #b5b5b5; }
.caret {
  display: block; width: 0; height: 0; margin-top: 5px;
  border-left: 2px solid transparent; border-right: 2px solid transparent; border-top: 2.500px solid #666;
}
.caret.off { border-top-color: #ccc; }
.caret.inline { margin: 0; }
.caret.c-add { margin-left: 9px; }
.caret.c-sign { margin-left: 11px; }
.caret.c-obj { margin-left: 11px; }
.caret.c-sym { margin-left: 11px; }
.caret.c-sym2 { margin-left: 5px; }
.stack { display: flex; flex-direction: column; }
.stack-three { padding-top: 2px; }
.stack .row { display: flex; align-items: center; height: 27px; white-space: nowrap; }
.stack-addin { padding-left: 17px; padding-top: 17px; }
.stack-addin .row { height: 20px; margin-bottom: 18px; gap: 3px; }
.g-links .stack-three { padding-left: 17px; }
.wide { margin-right: 3px; }
.stack-obj { padding-left: 1px; margin-top: -3px; }
.stack-obj .rowi { margin-right: 3px; }
.date { margin-left: 8px; }
.g-sym .stack-three { padding-left: 16px; }
.pi, .omega { width: 20px; margin-right: 3px; text-align: center; color: #2f6db5; font-family: "Liberation Serif", serif; line-height: 27px; }
.pi { font-size: 36px; line-height: 24px; font-style: italic; font-weight: 400; margin-top: -5px; -webkit-text-stroke: .5px #2f6db5; }
.omega { font-size: 26px; line-height: 24px; font-weight: 700; }
.sym { margin-right: 5px; margin-left: 1px; }
.hash { font: 700 15px "Open Sans", sans-serif; fill: #3f76b8; text-anchor: middle; }
.hashs { font: 700 9px "Open Sans", sans-serif; fill: #3f76b8; text-anchor: middle; }
.iconA { font: 700 15px "Open Sans", sans-serif; fill: #3f76b8; }
.artA { font: italic 600 34px "Open Sans", sans-serif; fill: #3f76b8; text-anchor: middle; }
.dropA { font: 700 21px "Open Sans", sans-serif; fill: #c9c9c9; }
.wordW { font: 700 10px "Open Sans", sans-serif; fill: #fff; text-anchor: middle; }
.collapse { margin-left: auto; width: 16px; padding-top: 96px; }

/* document */
.docarea { flex: 1; background: #e6e6e6; padding: 20px 0 0 387px; min-height: 0; }
.page { width: 859px; height: 100%; background: #fff; padding: 77px 0 0 730px; }
.cropmark { width: 26px; height: 26px; border-left: 1px solid #cfcfcf; border-bottom: 1px solid #cfcfcf; }

/* status bar */
.status {
  flex: none; height: 34px; background: #f1f1f1; display: flex; align-items: center;
  font-family: "Noto Sans CJK SC", sans-serif; font-size: 13px; color: #555;
}
.st { white-space: nowrap; }
.st-page { word-spacing: 2.600px; }
.st-words { margin-left: 16px; }
.st-proof { margin-left: 18px; }
.st-lang { margin-left: 15px; }
.views { margin-left: auto; display: flex; align-items: center; }
.view-on { width: 32px; height: 34px; background: #c6c6c6; display: flex; align-items: center; justify-content: center; margin: 0 9px; }
.sogou { display: flex; align-items: center; margin-left: 13px; }
.sg-logo { margin-right: -4px; position: relative; z-index: 1; }
.sg-bar {
  width: 153px; height: 18px; background: #fff; display: flex; align-items: center; gap: 6.500px; padding-left: 9px; overflow: hidden;
}
.sg-zh { color: #1f6fc4; font-weight: 700; font-size: 13px; }
.sg-dot { color: #1f6fc4; font-weight: 700; margin: 0 1px 0 3px; }

/* taskbar */
.taskbar { flex: none; height: 35px; background: #06070c; display: flex; align-items: center; color: #eee; overflow: hidden; }
.startbtn { margin-left: 10px; margin-top: 6px; }
.tb-sep { width: 2px; height: 30px; background: #26272c; margin-left: 24px; align-self: flex-end; }
.wordico { margin-left: 26px; margin-top: 8px; }
.tray { margin-left: auto; display: flex; align-items: flex-start; height: 35px; }
.tr-sg { margin-top: 4px; margin-right: 12px; }
.tr-up { margin-top: 17px; margin-right: 12px; }
.tr-qq { margin-top: 13px; margin-right: 10px; }
.tr-net { margin-top: 14px; margin-right: 8px; }
.tr-vol { margin-top: 14px; }
.clock {
  width: 100px; margin-left: 17px; display: flex; flex-direction: column; align-items: center;
  font-family: "Noto Sans CJK SC", sans-serif; font-size: 13.500px; line-height: 19px; padding-top: 3px; white-space: nowrap; color: #ececec;
}
.tr-note { margin: 14px 21px 0 27px; }

.handle { position: absolute; left: 1647px; top: 728px; width: 8px; height: 63px; background: #46494d; border-radius: 3px 0 0 3px; }

/* dialog */
.dialog {
  position: absolute; left: 239px; top: 225px; width: 563px; height: 466px;
  background: #f0f0f0; border: 2px solid #74a7dc; box-shadow: 0 0 3px rgba(70,110,150,.35);
  display: flex; flex-direction: column;
  font-family: "Open Sans", "Noto Sans CJK SC", sans-serif; font-size: 13px; color: #444;
}
.dlg-title { height: 30px; flex: none; background: #fff; display: flex; align-items: center; padding: 0 0 3px 6px; color: #555; font-size: 13px; }
.dlg-help { margin-left: auto; margin-right: 41px; font-size: 12px; }
.dlg-x { margin-right: 18px; }
.dlg-body { flex: 1; display: flex; flex-direction: column; padding: 8px 0 0 5px; min-height: 0; }
.dlg-tabs { display: flex; height: 27px; align-items: flex-end; flex: none; }
.dtab { height: 24px; line-height: 23px; padding: 0 8px; border: 1px solid #e2e2e2; border-bottom: 0; white-space: nowrap; }
.dtab-on { height: 27px; line-height: 28px; background: #fff; border: 0; width: 61px; padding: 0 0 0 9px; }
.panel { position: relative; width: 548px; height: 348px; background: #fff; padding: 13px 0 0 9px; flex: none; }
.fontrow { display: flex; height: 24px; align-items: center; }
.fontlab { width: 48px; white-space: nowrap; padding-top: 3px; }
.combo { width: 243px; height: 24px; border: 1px solid #e4e4e4; border-right: 0; display: flex; align-items: center; padding-left: 0; justify-content: space-between; }
.combo-val { background: #a6cdf2; color: #24415f; padding: 0 2px 0 1px; height: 17px; line-height: 15px; font-size: 13.500px; }
.combo-btn { width: 19px; height: 23px; background: #cfe4f8; border: 1px solid #b6d4f1; display: flex; align-items: center; justify-content: center; }
.gridrow { display: flex; margin-top: 7px; }
.symgrid {
  display: grid; grid-template-columns: repeat(15, 32.500px); grid-template-rows: repeat(4, 35px);
  border-top: 1px solid #d8d8d8; border-left: 1px solid #d8d8d8; width: 489px; height: 141px; flex: none;
}
.cell { border-right: 1px solid #d4d4d4; border-bottom: 1px solid #d4d4d4; display: flex; align-items: center; justify-content: center; }
.cell svg { width: 100%; height: 100%; display: block; margin-top: -3px; }
.cell-on { background: #0a6fd6; }
.et { font: italic 700 28px "Liberation Serif", serif; color: #111; line-height: 28px; letter-spacing: -2px; padding-bottom: 3px; }
.amp { font: 700 30px "Liberation Serif", serif; color: #111; line-height: 28px; padding-bottom: 3px; }
.amp2 { font: 26px "DejaVu Serif", serif; color: #111; line-height: 28px; padding-bottom: 3px; }
.vscroll { width: 18px; height: 141px; background: #f0f0f0; display: flex; flex-direction: column; align-items: center; padding-top: 5px; }
.vthumb { width: 18px; height: 18px; background: #c8c8c8; margin-top: 6px; }
.vdown { margin-top: auto; margin-bottom: 5px; }
.recent-lab { height: 28px; line-height: 31px; white-space: nowrap; }
.recent {
  display: grid; grid-template-columns: repeat(15, 32.600px); width: 490px; height: 37px;
  border: 1px solid #d8d8d8;
}
.rc { border-right: 1px solid #d8d8d8; display: flex; align-items: center; justify-content: center; color: #222; overflow: hidden; font-family: "Liberation Sans", sans-serif; }
.rc:last-child { border-right: 0; }
.rc svg { width: 100%; height: 100%; }
.r-pm { font-size: 32px; color: #444; font-family: "Liberation Serif", serif; }
.r-pmb { font-size: 24px; font-weight: 700; color: #111; }
.r-cjk { font: 17px "Noto Sans CJK SC", sans-serif; padding-top: 2px; }
.r-comma { padding-right: 9px; }
.r-p { font-size: 19px; color: #222; }
.r-bang { font-size: 25px; color: #333; font-family: "Open Sans", sans-serif; font-weight: 300; }
.r-q { font-size: 25px; color: #333; font-family: "Open Sans", sans-serif; font-weight: 300; }
.r-s { font-size: 15px; color: #333; font-family: "Liberation Serif", serif; padding-bottom: 10px; }
.r-par { font-size: 27px; color: #555; font-family: "Open Sans", sans-serif; font-weight: 300; padding-left: 12px; }
.r-br { font: 700 23px "Noto Sans CJK SC", sans-serif; color: #000; padding-right: 8px; }
.info { display: flex; height: 50px; margin-top: 3px; }
.info-l { width: 225px; line-height: 25px; white-space: nowrap; }
.info-r { display: flex; align-items: center; padding-top: 4px; white-space: nowrap; }
.codeinput { width: 49px; height: 27px; border: 1px solid #e4e4e4; margin-left: 3px; padding-left: 2px; line-height: 21px; }
.from { margin-left: 10px; }
.fromsel { width: 120px; height: 28px; margin-left: 3px; border: 1px solid #e0e0e0; display: flex; align-items: center; justify-content: space-between; padding-left: 3px; font-size: 13.500px; }
.fromsel-btn { width: 18px; height: 24px; background: #e6e6e6; border: 1px solid #d8d8d8; margin-right: 1px; display: flex; align-items: center; justify-content: center; }
.btnrow { display: flex; align-items: center; margin-top: 5px; height: 29px; }
.btn { background: #e1e1e1; border: 1px solid #d6d6d6; display: flex; align-items: center; justify-content: center; white-space: nowrap; }
.btn-auto { width: 97px; height: 29px; }
.btn-key { width: 83px; height: 29px; margin-left: 9px; }
.keylab { margin-left: 10px; }
.dlg-foot { display: flex; justify-content: flex-end; gap: 10px; padding: 11px 5px 0 0; }
.btn-main { width: 75px; height: 30px; padding-bottom: 1px; }
.btn-default { border: 2px solid #5b9bd5; }
.grip { position: absolute; right: -2px; bottom: -2px; }

/* dropdown overlay */
.droplist {
  position: absolute; left: 57px; top: 38px; width: 243px; height: 120px;
  background: #fff; border: 1px solid #8a8a8a; border-top-color: #7a7a7a; display: flex;
  font-size: 13.300px; color: #333; z-index: 2; box-shadow: 1px 1px 1px rgba(0,0,0,.15);
}
.dl-items { flex: 1; }
.dl-items div { height: 17px; line-height: 17px; padding-left: 1px; white-space: nowrap; }
.dl-sel { background: #0a6fd6; color: #fff; }
.dl-scroll { width: 19px; background: #f0f0f0; display: flex; flex-direction: column; align-items: center; padding-top: 5px; }
.dl-thumb { width: 18px; height: 18px; background: #c8c8c8; margin-top: 7px; }
.redbox { position: absolute; left: 44px; top: 34px; width: 111px; height: 25px; border: 3px solid #e53535; z-index: 3; }
.cur-arrow { position: absolute; left: 149px; top: 58px; z-index: 3; }

/* watermark */
.wm { position: absolute; left: 44px; top: 33px; width: 124px; z-index: 5; }
.wm-logo { display: block; }
.wm-text {
  margin-top: -1px; width: 124px; font: 700 60px/56px "Noto Sans CJK SC", sans-serif;
  white-space: nowrap; letter-spacing: 1.500px;
  background: linear-gradient(90deg, #4cb4ea, #2f97d8); -webkit-background-clip: text; background-clip: text; color: transparent;
}
```
